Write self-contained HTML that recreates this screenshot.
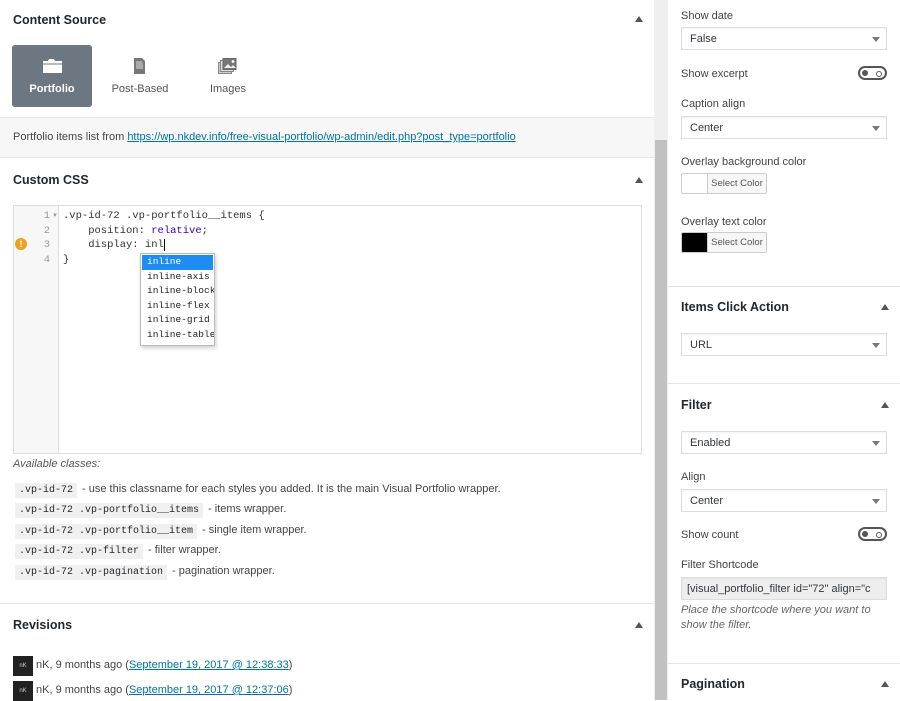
<!DOCTYPE html>
<html><head><meta charset="utf-8"><style>
*{box-sizing:border-box;margin:0;padding:0}
body{width:900px;height:700px;overflow:hidden;background:#fff;font-family:"Liberation Sans",sans-serif;font-size:11px;color:#32373c;position:relative}
.abs{position:absolute}
h3{position:absolute;font-size:12.5px;font-weight:bold;color:#23282d}
.tri{position:absolute;width:0;height:0;border-left:4px solid transparent;border-right:4px solid transparent;border-bottom:6px solid #555}
.hr{position:absolute;height:1px;background:#e2e4e7}
.mono{font-family:"Liberation Mono",monospace}
.row{position:absolute;left:15px;font-size:11px;color:#444;white-space:nowrap}
.code{display:inline-block;background:#f0f0f0;padding:2px 4px;margin-right:5px;font-family:"Liberation Mono",monospace;font-size:10px;color:#23282d}
.sel{position:absolute;left:681px;width:206px;height:23px;border:1px solid #ddd;background:#fff;padding:5px 8px;font-size:11px;color:#32373c;box-shadow:inset 0 1px 2px rgba(0,0,0,.05)}
.sel:after{content:"";position:absolute;right:6px;top:9px;border-left:4px solid transparent;border-right:4px solid transparent;border-top:5px solid #777}
.sel.na:after{display:none}
.lbl{position:absolute;left:681px;font-size:11px;color:#444}
.tog{position:absolute;left:858px;width:29px;height:14px;border:2px solid #555;border-radius:8px}
.tog:before{content:"";position:absolute;left:2px;top:2px;width:6px;height:6px;border-radius:50%;background:#555}
.tog:after{content:"";position:absolute;right:3px;top:3px;width:4px;height:4px;border-radius:50%;border:1px solid #555}
.cbtn{position:absolute;left:681px;width:86px;height:21px;border:1px solid #ccc;border-radius:2px;background:#f7f7f7}
.cbtn span{position:absolute;left:25px;right:0;top:0;height:19px;border-left:1px solid #ccc;font-size:9.5px;color:#555;text-align:center;line-height:19px;background:#f7f7f7}
.ac div{height:14.6px;line-height:14.6px;padding-left:5px;white-space:nowrap}
a{color:#0073aa;text-decoration:underline}
</style></head><body>
<h3 style="left:13px;top:13px">Content Source</h3>
<div class="tri" style="left:635px;top:16px"></div>
<div class="abs" style="left:12px;top:45px;width:80px;height:62px;background:#6c7781;border-radius:3px"></div>
<svg class="abs" style="left:42px;top:58px" width="22" height="16" viewBox="0 0 22 16"><path d="M1 3h5l1-2h5l1 2h7v12H1z" fill="#fff"/><path d="M1 6h20" stroke="#6c7781" stroke-width="1"/></svg>
<div class="abs" style="left:12px;top:83px;width:80px;text-align:center;color:#fff;font-weight:bold;font-size:11px">Portfolio</div>
<svg class="abs" style="left:133px;top:58px" width="13" height="16" viewBox="0 0 13 16"><path d="M1 0h8l3 3v13H1z" fill="#777"/><path d="M3 4h6M3 6h7M3 8h7M3 10h7" stroke="#ddd" stroke-width="1"/></svg>
<div class="abs" style="left:100px;top:83px;width:80px;text-align:center;color:#555;font-size:11px">Post-Based</div>
<svg class="abs" style="left:218px;top:58px" width="19" height="17" viewBox="0 0 19 17"><rect x="0.5" y="4.5" width="13" height="11" fill="#ccc" stroke="#888"/><rect x="2.5" y="2.5" width="13" height="11" fill="#ddd" stroke="#888"/><rect x="5" y="0.5" width="13" height="11" fill="#777" stroke="#666"/><path d="M6 10l4-4 3 3 2-2 3 3z" fill="#eee"/><circle cx="15" cy="3.5" r="1.4" fill="#fff"/></svg>
<div class="abs" style="left:188px;top:83px;width:80px;text-align:center;color:#555;font-size:11px">Images</div>
<div class="abs" style="left:0;top:117px;width:654px;height:41px;background:#f7f7f7;border-top:1px solid #e8e8e8;border-bottom:1px solid #e8e8e8"></div>
<div class="abs" style="left:13px;top:131px;font-size:11px;color:#444">Portfolio items list from <a>https://wp.nkdev.info/free-visual-portfolio/wp-admin/edit.php?post_type=portfolio</a></div>
<h3 style="left:13px;top:173px">Custom CSS</h3>
<div class="tri" style="left:635px;top:177px"></div>
<div class="abs" style="left:13px;top:205px;width:629px;height:249px;border:1px solid #ddd;background:#fff"></div>
<div class="abs" style="left:14px;top:206px;width:45px;height:247px;background:#f7f7f7;border-right:1px solid #ddd"></div>
<div class="abs mono" style="left:14px;top:209px;width:36px;text-align:right;color:#999;font-size:10.5px;line-height:14.6px">1<br>2<br>3<br>4</div>
<div class="abs" style="left:52px;top:213px;font-size:6px;color:#999">▼</div>
<div class="abs" style="left:15px;top:238px;width:12px;height:12px;border-radius:50%;background:#f0a020;color:#fff;font-weight:bold;font-size:9px;text-align:center;line-height:12px">!</div>
<div class="abs mono" style="left:63px;top:209px;font-size:10.5px;line-height:14.6px;color:#333;white-space:pre">.vp-id-72 .vp-portfolio__items {
    position: <span style="color:#30a">relative</span>;
    display: inl<span style="border-left:1px solid #000"></span>
}</div>
<div class="abs mono ac" style="left:140px;top:253px;width:75px;height:93px;border:1px solid #bbb;background:#fff;box-shadow:1px 2px 4px rgba(0,0,0,.2);font-size:9.5px;color:#222;padding:1px;overflow:hidden">
<div style="background:#1e8cf0;color:#fff">inline</div><div>inline-axis</div><div>inline-block</div><div>inline-flex</div><div>inline-grid</div><div>inline-table</div></div>
<div class="abs" style="left:13px;top:458px;font-style:italic;color:#555;font-size:11px">Available classes:</div>
<div class="row" style="top:483px"><span class="code">.vp-id-72</span>- use this classname for each styles you added. It is the main Visual Portfolio wrapper.</div>
<div class="row" style="top:503px"><span class="code">.vp-id-72 .vp-portfolio__items</span>- items wrapper.</div>
<div class="row" style="top:524px"><span class="code">.vp-id-72 .vp-portfolio__item</span>- single item wrapper.</div>
<div class="row" style="top:544px"><span class="code">.vp-id-72 .vp-filter</span>- filter wrapper.</div>
<div class="row" style="top:565px"><span class="code">.vp-id-72 .vp-pagination</span>- pagination wrapper.</div>
<div class="hr" style="left:0;top:603px;width:654px"></div>
<h3 style="left:13px;top:618px">Revisions</h3>
<div class="tri" style="left:635px;top:622px"></div>
<div class="abs" style="left:13px;top:656px;width:20px;height:20px;background:#222;color:#ccc;font-size:6px;text-align:center;line-height:20px">nK</div>
<div class="abs" style="left:36px;top:659px;font-size:11px;color:#444">nK, 9 months ago (<a>September 19, 2017 @ 12:38:33</a>)</div>
<div class="abs" style="left:13px;top:681px;width:20px;height:20px;background:#222;color:#ccc;font-size:6px;text-align:center;line-height:20px">nK</div>
<div class="abs" style="left:36px;top:684px;font-size:11px;color:#444">nK, 9 months ago (<a>September 19, 2017 @ 12:37:06</a>)</div>
<div class="abs" style="left:654px;top:0;width:14px;height:700px;background:#efefef"></div>
<div class="abs" style="left:655px;top:140px;width:12px;height:560px;background:#c1c1c1"></div>
<div class="lbl" style="top:10px">Show date</div>
<div class="sel" style="top:27px">False</div>
<div class="lbl" style="top:68px">Show excerpt</div>
<div class="tog" style="top:66px"></div>
<div class="lbl" style="top:98px">Caption align</div>
<div class="sel" style="top:116px">Center</div>
<div class="lbl" style="top:156px">Overlay background color</div>
<div class="cbtn" style="top:173px;background:#fff"><span>Select Color</span></div>
<div class="lbl" style="top:216px">Overlay text color</div>
<div class="cbtn" style="top:232px;background:#000"><span>Select Color</span></div>
<div class="hr" style="left:668px;top:286px;width:232px"></div>
<h3 style="left:681px;top:300px">Items Click Action</h3>
<div class="tri" style="left:881px;top:304px"></div>
<div class="sel" style="top:333px">URL</div>
<div class="hr" style="left:668px;top:383px;width:232px"></div>
<h3 style="left:681px;top:398px">Filter</h3>
<div class="tri" style="left:881px;top:402px"></div>
<div class="sel" style="top:431px">Enabled</div>
<div class="lbl" style="top:471px">Align</div>
<div class="sel" style="top:489px">Center</div>
<div class="lbl" style="top:529px">Show count</div>
<div class="tog" style="top:527px"></div>
<div class="lbl" style="top:559px">Filter Shortcode</div>
<div class="sel na" style="top:577px;background:#eee;overflow:hidden;white-space:nowrap;padding-left:5px">[visual_portfolio_filter id="72" align="c</div>
<div class="lbl" style="top:603px;font-style:italic;color:#666;width:210px;line-height:15px">Place the shortcode where you want to show the filter.</div>
<div class="hr" style="left:668px;top:663px;width:232px"></div>
<h3 style="left:681px;top:677px">Pagination</h3>
<div class="tri" style="left:881px;top:681px"></div>
</body></html>
